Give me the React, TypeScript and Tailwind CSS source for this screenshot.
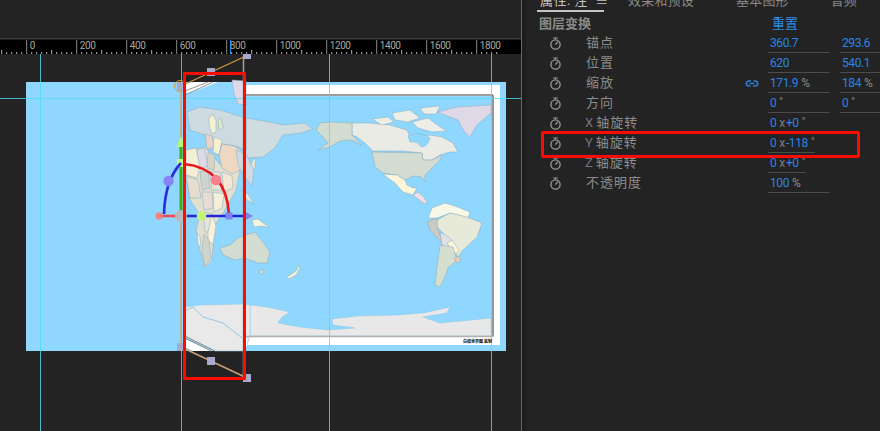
const BLUE = "#8fd7ff";
const COAST = "#8aa9ba";

// world map shapes, in page pixels
const land: [string, string][] = [
  // antarctica, flat part
  ["250,305 267,307 290,312 282,317 278,323 300,327 328,330 355,328 333,325 332,319 357,316 397,315 423,313 450,307 447,313 423,317 440,323 491,318 491,336 250,336", "#e8e8e8"],
  // antarctica, rotated part
  ["185,307 200,305 243,304 250,305 250,336 245,351 215,351 185,337", "#e9e9e9"],
  // north america
  ["352,123 370,123 390,125 407,130 410,137 420,138 430,135 442,137 453,143 458,152 450,152 440,155 432,160 423,160 422,153 403,151 373,151 365,143 357,137 352,135", "#ebebe5"],
  ["372,152 422,153 423,160 432,160 442,155 440,160 433,167 425,175 425,182 422,177 413,176 405,180 397,175 383,173 375,167", "#d2dcd0"],
  ["383,174 397,175 405,180 407,185 413,188 417,188 413,195 403,192 395,183 388,178", "#fdf6d8"],
  ["413,195 418,192 424,197 428,204 423,203 418,199", "#ecdfe6"],
  ["320,123 332,122 352,123 352,135 362,146 352,140 340,141 330,147 318,150 328,143 322,136 316,130", "#d2dcd0"],
  ["372,119 388,117 394,122 382,125", "#eeeee8"],
  ["392,113 410,110 420,118 408,122 395,120", "#eeeee8"],
  ["412,122 428,118 440,127 447,131 432,132 418,128", "#eeeee8"],
  ["420,108 440,106 436,114 424,114", "#eeeee8"],
  ["437,112 457,107 491,105 491,113 477,125 470,137 463,130 458,120", "#dfd8e7"],
  // south america
  ["428,218 432,208 445,203 455,206 470,212 468,218 450,213 437,218", "#f7f8e8"],
  ["437,220 450,213 467,217 482,223 477,237 463,250 458,257 450,245 443,233 435,225", "#e8ead9"],
  ["427,222 437,218 438,230 443,243 437,238 430,230", "#c9c9c5"],
  ["440,232 450,238 453,243 447,247 442,245", "#e1e1e5"],
  ["447,243 452,240 459,250 456,254 450,248", "#f8f5d8"],
  ["440,245 453,247 457,260 448,268 445,277 440,287 435,285 437,268", "#d5dfd0"],
  ["454,258 459,256 461,260 457,263", "#eccdb8"],
  // asia, flat part
  ["246,118 270,122 283,125 305,123 313,129 302,133 283,135 275,148 263,157 246,158", "#cfdce0"],
  ["253,160 256,158 255,168 250,172 249,168", "#e8e8d8"],
  // oceania
  ["220,248 230,245 238,238 255,232 263,242 270,252 267,263 258,263 245,258 235,260 223,255", "#d2dcd0"],
  ["259,270 264,270 263,274 260,274", "#d2dcd0"],
  ["252,220 258,219 270,228 262,226 254,227", "#f5f3dc"],
  ["287,277 296,271 299,265 300,268 296,275 289,279", "#f6f3d0"],
  // asia and europe, squeezed part
  ["187,112 200,107 220,110 246,118 246,150 235,146 222,144 210,150 205,135 190,130", "#cddbe0"],
  ["209,118 213,114 216,120 216,132 212,134 209,125", "#f2f2d0"],
  ["218,120 221,118 223,128 219,130", "#dcecc0"],
  ["232,80 246,81 246,105 238,104 234,94", "#dfd8e7"],
  ["186,150 205,147 225,170 240,170 236,190 225,210 215,225 212,260 205,268 200,250 196,230 200,215 190,200 186,175", "#dfe0d2"],
  ["186,150 196,148 200,165 197,178 186,175", "#f5eed6"],
  ["197,150 204,148 208,165 200,170", "#dcdce8"],
  ["205,134 212,136 214,146 207,150", "#e9d3c6"],
  ["214,137 222,140 219,155 213,152", "#f5f0d0"],
  ["208,152 215,155 214,170 207,168", "#d8d3c8"],
  ["222,144 234,146 243,152 243,168 232,174 222,168 219,155", "#edd8c2"],
  ["200,172 208,170 210,188 202,190", "#cfd4d0"],
  ["210,172 220,172 222,190 212,190", "#e8e5d8"],
  ["222,172 232,176 233,188 224,192", "#f4e8d4"],
  ["186,176 198,180 201,198 190,198", "#e5ddd0"],
  ["202,192 212,192 213,208 204,210", "#e9dcd4"],
  ["213,192 224,194 222,208 214,212", "#f3efd8"],
  ["203,212 212,214 212,232 205,232", "#e4e4d8"],
  ["212,214 216,226 213,245 208,240 208,232", "#fbf0d8"],
  ["204,234 209,240 211,258 205,266 202,250", "#cfd5c8"],
  ["197,233 200,236 201,247 198,245", "#f0efe4"],
  ["236,150 246,154 254,170 252,186 244,176 238,165", "#cddbe0"],
  ["240,190 248,194 254,204 247,200", "#e5e8d8"],
];

function GlobeMap() {
  return (
    <>
      <rect x="26" y="82" width="480" height="269" fill={BLUE} />
      {/* frame of the flat half */}
      <path d="M246 85H500V345H246V337H492V96H246Z" fill="#fff" />
      {land.map(([pts, fill], i) => (
        <polygon key={i} points={pts} fill={fill} stroke={i < 2 ? "#8cc4e4" : COAST} strokeWidth="0.5" />
      ))}
      <path d="M246 95H493" fill="none" stroke="#7d7d7d" strokeWidth="1.6" />
      <path d="M493 95V336.5" fill="none" stroke="#7d7d7d" strokeWidth="1.6" />
      <path d="M246 336.5H493" fill="none" stroke="#b0b0b0" strokeWidth="1.6" />
      <path d="M408 136Q420 131 430 138Q428 147 421 147Q418 141 410 142Z" fill={BLUE} stroke={COAST} strokeWidth="0.4" />
      <path d="M185 311L193 307L203 317L223 323L242 338" fill="none" stroke="#8cc4e4" strokeWidth="0.9" />
      {/* frame of the squeezed half */}
      <polygon points="185,84 195,82 218,82 187,94" fill="#fff" />
      <path d="M185 91L208 82M185 95L213 82" stroke="#777" strokeWidth="0.8" />
      <polygon points="185,339 212,351 193,351 185,347" fill="#fff" />
      <path d="M185 336L215 351M185 338L211 351" stroke="#777" strokeWidth="0.8" />
      <rect x="243" y="338" width="4" height="8" fill="#fff" />
    </>
  );
}

function Guides() {
  return (
    <g stroke="#4fdcf5" strokeWidth="1" opacity="0.8">
      <path d="M40.5 54V431M181.5 54V431M329.5 54V431M491.5 54V431" />
      <path d="M0 98.5H521" />
    </g>
  );
}

function LayerHandles() {
  return (
    <g>
      <path d="M243.5 56V378" stroke="#a0a0a0" strokeWidth="1.5" />
      <path d="M181 86V347" stroke="#d9a267" strokeWidth="1.5" />
      <path d="M181 86L246 56" stroke="#d8963a" strokeWidth="1.3" />
      <path d="M181 347L247 378" stroke="#c9a27a" strokeWidth="1.5" />
      <circle cx="180" cy="86" r="5.5" fill="none" stroke="#e09a30" strokeWidth="1" />
      <rect x="177" y="82" width="8" height="9" fill="#a9a9cb" />
      <rect x="207" y="68" width="8" height="8" fill="#a9a9cb" />
      <rect x="243" y="54" width="8" height="5" fill="#a9a9cb" />
      <rect x="177" y="343" width="8" height="8" fill="#a9a9cb" />
      <rect x="207" y="357" width="8" height="8" fill="#a9a9cb" />
      <rect x="243" y="374" width="8" height="8" fill="#a9a9cb" />
    </g>
  );
}

function Gizmo() {
  return (
    <g>
      <path d="M181 216V146" stroke="#3fae12" strokeWidth="3" />
      <polygon points="181,136 176,147 186,147" fill="#b6f57f" />
      <rect x="177" y="159" width="8" height="8" fill="#c3f77e" />
      <path d="M164 214Q165 180 181 163" fill="none" stroke="#2a2ae0" strokeWidth="2.6" />
      <path d="M184 164Q226 168 229 214" fill="none" stroke="#e8161c" strokeWidth="2.6" />
      <circle cx="168.5" cy="181" r="5.2" fill="#8585f5" />
      <circle cx="216" cy="180" r="5.2" fill="#f8808a" />
      <path d="M160 216H181" stroke="#f0484f" strokeWidth="2.6" />
      <circle cx="159" cy="216" r="3.8" fill="#f8848a" />
      <path d="M181 216H246" stroke="#2323d8" strokeWidth="2.6" />
      <circle cx="181" cy="216" r="6" fill="#b9b9b9" />
      <circle cx="201.5" cy="216" r="4.8" fill="#c0f27c" />
      <rect x="225.5" y="212.5" width="7" height="7" fill="#8080f8" />
      <polygon points="253,216 244,211 244,221" fill="#8080f0" />
    </g>
  );
}

function Ruler() {
  const ticks = [];
  for (let i = -5; i < 100; i++) {
    const x = 1.7 + i * 5;
    if (x > 521) break;
    const major = (i + 5) % 10 === 0;
    const mid = i % 5 === 0;
    if (major) continue;
    ticks.push(<path key={i} d={`M${x} ${mid ? 50 : 52}V54`} stroke="#b5b5b5" strokeWidth="1" />);
  }
  const labels = [0, 200, 400, 600, 800, 1000, 1200, 1400, 1600, 1800];
  return (
    <svg width="521" height="16" viewBox="0 38 521 16" className="block bg-black">
      <rect x="0" y="38" width="521" height="1.5" fill="#3c3c3c" />
      {ticks}
      {labels.map((n, i) => {
        const x = 26.7 + i * 50;
        return (
          <g key={n}>
            <path d={`M${x} 40V54`} stroke="#8a8a8a" strokeWidth="1" />
            <text x={x + 3} y="48.5" fontSize="10" fill="#a8a89c" fontFamily="Roboto, sans-serif" letterSpacing="-0.4">{n}</text>
          </g>
        );
      })}
      <path d="M230.5 40V54" stroke="#2d8ceb" strokeWidth="1.2" />
    </svg>
  );
}

function Stopwatch() {
  return (
    <svg width="13" height="13" viewBox="0 0 13 13" fill="none" stroke="#959595" className="shrink-0">
      <circle cx="6.5" cy="7.5" r="4.6" strokeWidth="1.4" />
      <path d="M4 1H9M6.5 1V2.5M6.5 7.5L9 4.5" strokeWidth="1.2" />
    </svg>
  );
}

function LinkIcon() {
  return (
    <svg width="14" height="9" viewBox="0 0 14 9" fill="none" stroke="#2d7fd6" strokeWidth="1.5">
      <path d="M6 2H3.8A2.4 2.4 0 0 0 3.8 7H5.5" />
      <path d="M8 7H10.2A2.4 2.4 0 0 0 10.2 2H8.5" />
      <path d="M4.5 4.5H9.5" />
    </svg>
  );
}

function Field({ width, value, unit, mid, degree }: { width: string; value: string; unit?: string; mid?: string; degree?: string }) {
  return (
    <div className={`${width} h-5 shrink-0 border-b border-[#4c4c4c] pl-[2px] flex items-center text-[#2a85e8] tracking-[-0.4px] whitespace-nowrap`}>
      <span>{value}</span>
      {mid && <span className="ml-[3px] mr-[1px] text-[#7d7d7d]">x</span>}
      {mid && <span>{mid}</span>}
      {unit && <span className="ml-[3px] text-[#8a8a8a]">{unit}</span>}
      {degree && <span className="ml-[3px] -mt-[3px] text-[10px] text-[#8a8a8a]">°</span>}
    </div>
  );
}

function Row({ label, axis, link, children }: { label: string; axis?: string; link?: boolean; children?: React.ReactNode }) {
  return (
    <div className="flex h-5 items-center pl-[23px]">
      <div className="w-[37px] shrink-0">
        <Stopwatch />
      </div>
      <div className={`w-[159px] shrink-0 text-[13px] tracking-[1px] text-[#8d8d8d] ${axis ? "-ml-[1px]" : ""}`}>
        {axis && <span className="mr-[2px] font-['Roboto'] text-[#6f7580]">{axis}</span>}
        {label}
      </div>
      <div className={`flex w-[23px] shrink-0 ${axis ? "ml-[1px]" : ""}`}>{link && <LinkIcon />}</div>
      <div className="flex gap-[11px]">{children}</div>
    </div>
  );
}

function PropertiesPanel() {
  return (
    <div className="relative h-full flex-1 overflow-hidden bg-[#232323] font-['Roboto','Noto_Sans_CJK_SC',sans-serif] text-[12px]">
      <div className="-mt-[6px] flex h-[12px] items-start pl-[11px] text-[13px] leading-[13px]">
        <div className="h-[18px] w-[67px] shrink-0 whitespace-nowrap border-b-2 border-[#c4c4c4] pl-[3px] tracking-[0.5px] text-[#c4c4c4]">属性: 注&nbsp; ≡</div>
        <div className="ml-[24px] shrink-0 tracking-[0.2px] text-[#8a8a8a]">效果和预设</div>
        <div className="ml-[42px] shrink-0 tracking-[0.2px] text-[#8a8a8a]">基本图形</div>
        <div className="ml-[42px] shrink-0 text-[#8a8a8a]">音频</div>
      </div>
      <div className="mt-[7px] flex h-[21px] items-center pl-[13px] text-[13px] font-bold text-[#8a8a8a]">
        <span className="w-[233px]">图层变换</span>
        <span className="font-normal text-[#2d8ceb]">重置</span>
      </div>
      <div className="-mt-[1px]">
        <Row label="锚点">
          <Field width="w-[61px]" value="360.7" />
          <Field width="w-[40px]" value="293.6" />
        </Row>
        <Row label="位置">
          <Field width="w-[61px]" value="620" />
          <Field width="w-[40px]" value="540.1" />
        </Row>
        <Row label="缩放" link>
          <Field width="w-[61px]" value="171.9" unit="%" />
          <Field width="w-[40px]" value="184" unit="%" />
        </Row>
        <Row label="方向">
          <Field width="w-[61px]" value="0" degree="°" />
          <Field width="w-[40px]" value="0" degree="°" />
        </Row>
        <Row label="轴旋转" axis="X">
          <Field width="w-[38px]" value="0" mid="+0" degree="°" />
        </Row>
        <Row label="轴旋转" axis="Y">
          <Field width="w-[47px]" value="0" mid="-118" degree="°" />
        </Row>
        <Row label="轴旋转" axis="Z">
          <Field width="w-[38px]" value="0" mid="+0" degree="°" />
        </Row>
        <Row label="不透明度">
          <Field width="w-[61px]" value="100" unit="%" />
        </Row>
      </div>
      {/* hand-drawn highlight on the Y rotation row */}
      <div className="absolute left-[15px] top-[131px] h-[27px] w-[319px] rounded-[2px] border-[3px] border-[#fa0c00]" />
    </div>
  );
}

export default function App() {
  return (
    <div className="flex h-[431px] w-[880px] overflow-hidden bg-[#232323]">
      <div className="flex h-full w-[521px] shrink-0 flex-col">
        <div className="h-[38px] shrink-0" />
        <div className="relative z-10 h-[16px] shrink-0">
          <Ruler />
        </div>
        <div className="relative flex-1 overflow-hidden">
          <svg width="521" height="377" viewBox="0 54 521 377" className="block blur-[0.3px]">
            <GlobeMap />
            <Guides />
            <LayerHandles />
            <Gizmo />
          </svg>
          {/* credit printed in the corner of the map */}
          <span className="absolute left-[463px] top-[284px] whitespace-nowrap font-['Noto_Sans_CJK_SC',sans-serif] text-[4px] font-bold leading-[6px] text-black">白模世界图 监制</span>
          {/* hand-drawn highlight on the rotated layer */}
          <div className="absolute left-[183px] top-[18px] h-[308px] w-[63px] rounded-[1px] border-[3px] border-[#fa0c00]" />
        </div>
      </div>
      <div className="h-full w-[5px] shrink-0 border-l border-[#2f74bd] bg-[#1d1d1d]" />
      <PropertiesPanel />
    </div>
  );
}
